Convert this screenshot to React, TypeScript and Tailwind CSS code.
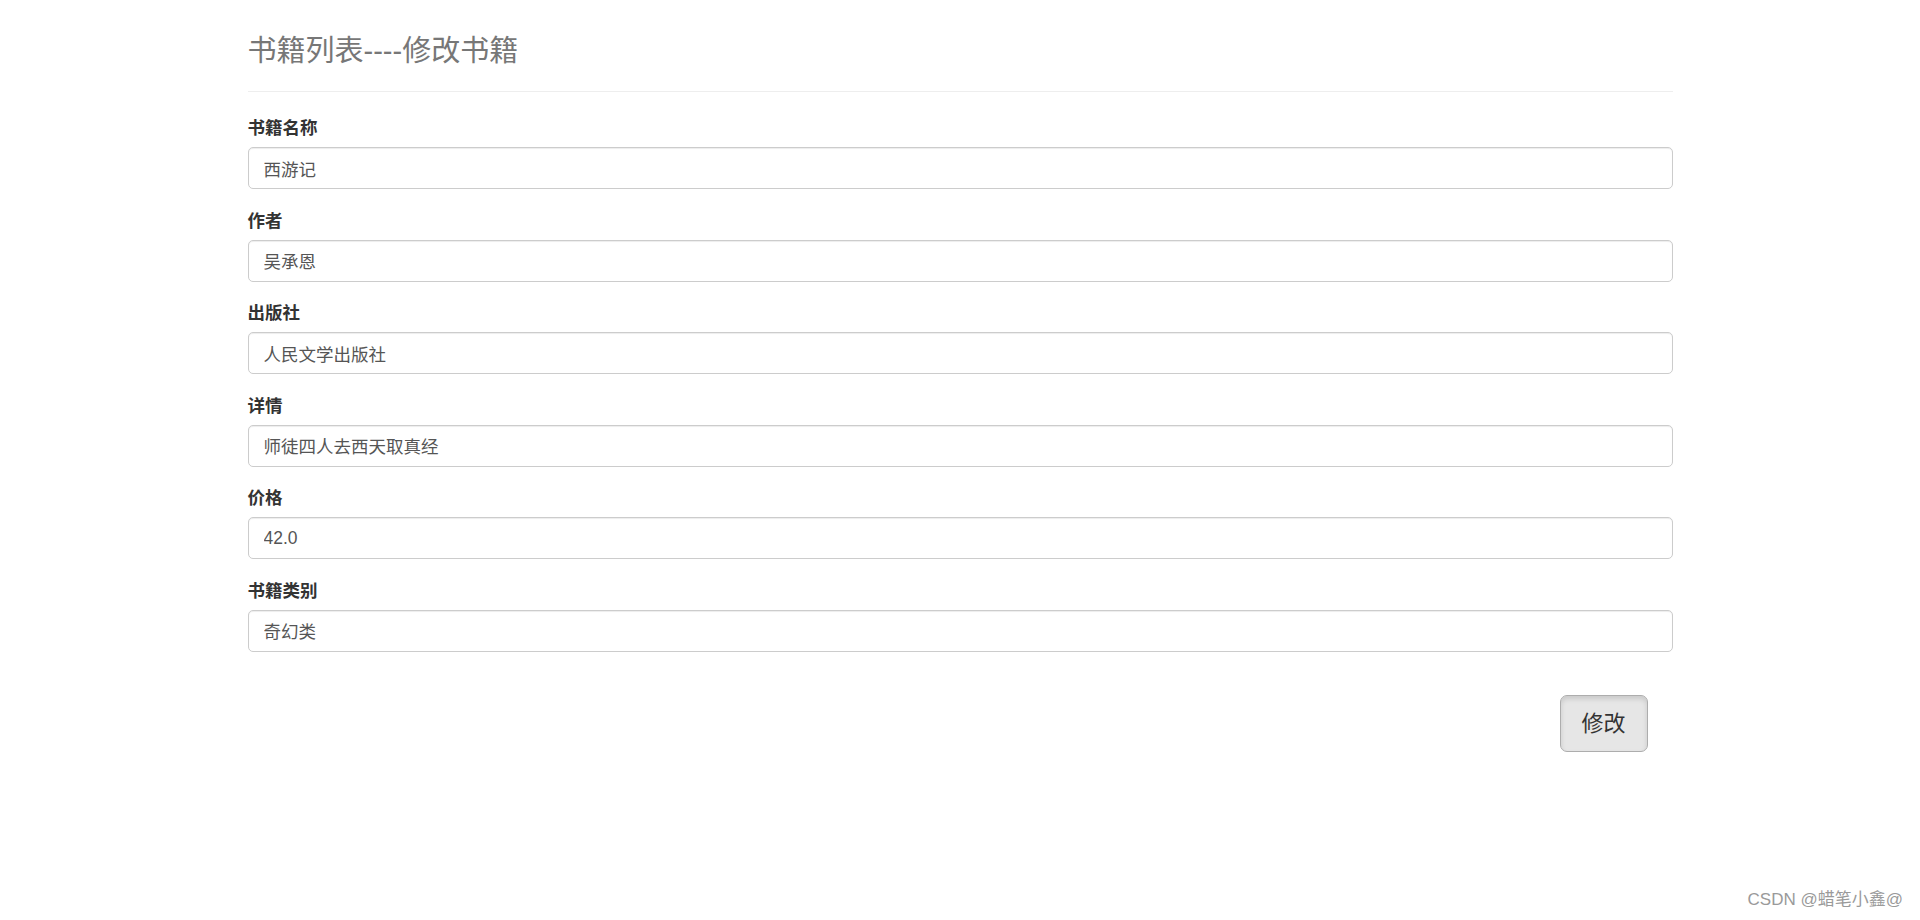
import React from "react";

const fields: { label: string; value: string }[] = [
  { label: "书籍名称", value: "西游记" },
  { label: "作者", value: "吴承恩" },
  { label: "出版社", value: "人民文学出版社" },
  { label: "详情", value: "师徒四人去西天取真经" },
  { label: "价格", value: "42.0" },
  { label: "书籍类别", value: "奇幻类" },
];

const font = {
  fontFamily:
    '"Liberation Sans", Arial, "Noto Sans CJK SC", sans-serif',
};

export default function App() {
  return (
    <div className="relative min-h-[920px] w-full bg-white" style={font}>
      <div className="mx-auto w-[1425px] pt-[35px]">
        <div className="border-b border-[#eeeeee] pb-[23px]">
          <h3 className="text-[29px] leading-[33px] font-normal text-[#777777]">
            书籍列表----修改书籍
          </h3>
        </div>
        <form className="mt-[24px]" onSubmit={(e) => e.preventDefault()}>
          {fields.map((f) => (
            <div key={f.label} className="mb-[19.5px]">
              <label className="mb-[6px] block h-[25px] text-[17.5px] leading-[25px] font-bold text-[#333333]">
                {f.label}
              </label>
              <input
                readOnly
                value={f.value}
                className="block h-[42px] w-full rounded-[5px] border border-[#cccccc] px-[15px] text-[17.5px] text-[#555555] shadow-[inset_0_1px_1px_rgba(0,0,0,0.075)] outline-none"
                style={font}
              />
            </div>
          ))}
          <div className="flex justify-end pr-[25px] pt-[24px]">
            <button
              type="button"
              className="h-[57px] w-[88px] rounded-[7px] border border-[#adadad] bg-[#e6e6e6] text-[22px] text-[#333333] shadow-[inset_0_3px_5px_rgba(0,0,0,0.125)]"
              style={font}
            >
              修改
            </button>
          </div>
        </form>
      </div>
      <div className="absolute right-[17px] bottom-[10px] text-[17px] leading-[20px] text-[#9a9a9a]">
        CSDN @蜡笔小鑫@
      </div>
    </div>
  );
}
